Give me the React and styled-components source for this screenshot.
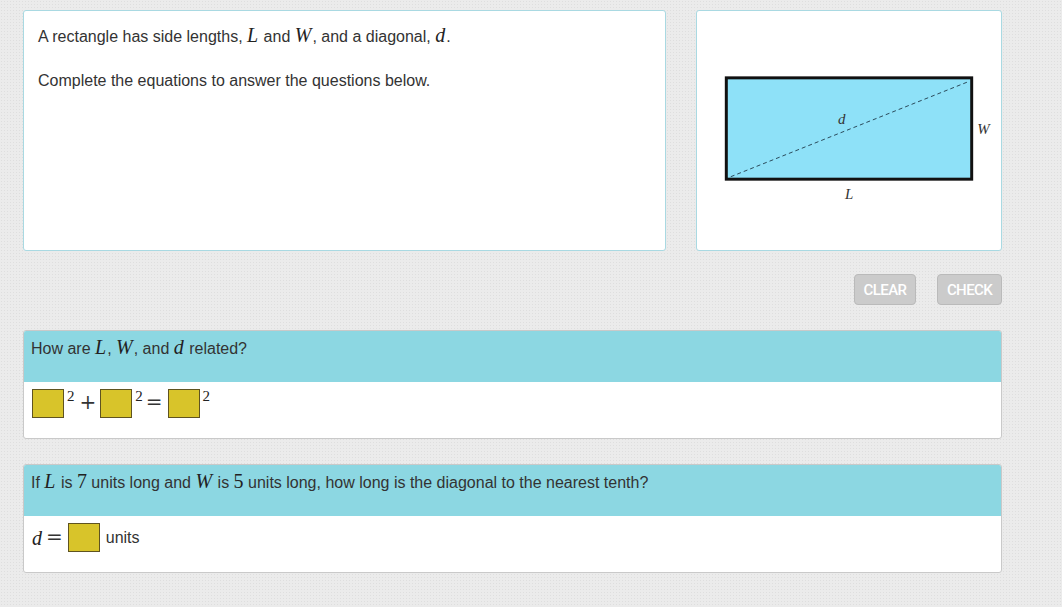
import React from 'react'
import styled, { createGlobalStyle } from 'styled-components'

const GlobalStyle = createGlobalStyle`
  body {
    margin: 0;
    background-color: #ebebeb;
    background-image: radial-gradient(#dedede 0.6px, transparent 0.7px);
    background-size: 3px 3px;
    font-family: "Liberation Sans", Arial, sans-serif;
    color: #333;
  }
`

const Page = styled.div`
  width: 979px;
  padding: 10px 0 30px 23px;
`

const TopRow = styled.div`
  display: grid;
  grid-template-columns: 643px 306px;
  gap: 30px;
  height: 239px;
`

const Card = styled.div`
  background: #fff;
  border: 1px solid #a9d9e2;
  border-radius: 3px;
  box-sizing: border-box;
`

const Intro = styled(Card)`
  padding: 13px 14px;
  font-size: 16px;
  line-height: 22px;
`

const Para = styled.p`
  margin: 0 0 22px;
`

const M = styled.span`
  font-family: "Liberation Serif", "Times New Roman", serif;
  font-style: ${({ upright }) => (upright ? 'normal' : 'italic')};
  font-size: 20px;
  color: #222;
  padding-right: ${({ upright }) => (upright ? '0' : '1px')};
`

const Figure = styled(Card)`
  display: flex;
  align-items: center;
  justify-content: center;
`

const Buttons = styled.div`
  display: flex;
  justify-content: flex-end;
  gap: 21px;
  margin-top: 25px;
`

const Btn = styled.button`
  height: 31px;
  width: ${({ wide }) => (wide ? '65px' : '62px')};
  padding: 0;
  background: #cbcbcb;
  border: 1px solid #bababa;
  border-radius: 4px;
  color: #fff;
  font-family: Roboto, "Liberation Sans", sans-serif;
  font-weight: 500;
  font-size: 15px;
  letter-spacing: -0.6px;
`

const Question = styled.div`
  margin-top: 25px;
  border: 1px solid #c9c9c9;
  border-radius: 3px;
  background: #fff;
  overflow: hidden;
`

const QHead = styled.div`
  background: #8cd7e2;
  height: 51px;
  box-sizing: border-box;
  padding: 5px 7px;
  font-size: 16px;
  line-height: 22px;
`

const QBody = styled.div`
  height: 56px;
  box-sizing: border-box;
  padding: 6px 8px;
  display: flex;
  align-items: flex-start;
  font-size: 16px;
`

const Blank = styled.span`
  display: inline-block;
  width: 30px;
  height: 27px;
  background: #d8c42a;
  border: 1px solid #5f5320;
  margin-top: 1px;
`

const Sup = styled.span`
  font-family: "Liberation Serif", serif;
  font-size: 15px;
  margin: 1px 0 0 3px;
  color: #222;
  line-height: 1;
`

const Op = styled.span`
  font-family: "DejaVu Serif", "Liberation Serif", serif;
  font-size: 20px;
  color: #333;
  margin: ${({ gap }) => gap || '4px 4px 0 5px'};
  line-height: 1;
`

const Word = styled.span`
  margin: 7px 0 0 6px;
`

const Diagram = () => (
  <svg width="306" height="239" viewBox="0 0 306 239">
    <rect x="29.5" y="66.5" width="247" height="102" fill="#8ee1f8" stroke="#111" strokeWidth="3" />
    <line x1="34" y1="166" x2="274" y2="70" stroke="#2a4a5a" strokeWidth="1" strokeDasharray="4 3" />
    <text x="142" y="113" fontFamily="Liberation Serif, serif" fontStyle="italic" fontSize="15" fill="#333">d</text>
    <text x="282" y="123" fontFamily="Liberation Serif, serif" fontStyle="italic" fontSize="15" fill="#333">W</text>
    <text x="149" y="188" fontFamily="Liberation Serif, serif" fontStyle="italic" fontSize="15" fill="#333">L</text>
  </svg>
)

const App = () => {
  return (
    <>
      <GlobalStyle />
      <Page>
        <TopRow>
          <Intro>
            <Para>
              A rectangle has side lengths, <M>L</M> and <M>W</M>, and a diagonal, <M>d</M>.
            </Para>
            <Para>Complete the equations to answer the questions below.</Para>
          </Intro>
          <Figure>
            <Diagram />
          </Figure>
        </TopRow>

        <Buttons>
          <Btn>CLEAR</Btn>
          <Btn wide>CHECK</Btn>
        </Buttons>

        <Question>
          <QHead>
            How are <M>L</M>, <M>W</M>, and <M>d</M> related?
          </QHead>
          <QBody>
            <Blank />
            <Sup>2</Sup>
            <Op>+</Op>
            <Blank />
            <Sup>2</Sup>
            <Op gap="4px 5px 0 3px">=</Op>
            <Blank />
            <Sup>2</Sup>
          </QBody>
        </Question>

        <Question>
          <QHead>
            If <M>L</M> is <M upright>7</M> units long and <M>W</M> is <M upright>5</M> units long, how long is the diagonal to the nearest tenth?
          </QHead>
          <QBody>
            <M style={{ marginTop: 5 }}>d</M>
            <Op gap="5px 5px 0 3px">=</Op>
            <Blank />
            <Word>units</Word>
          </QBody>
        </Question>
      </Page>
    </>
  )
}

export default App
